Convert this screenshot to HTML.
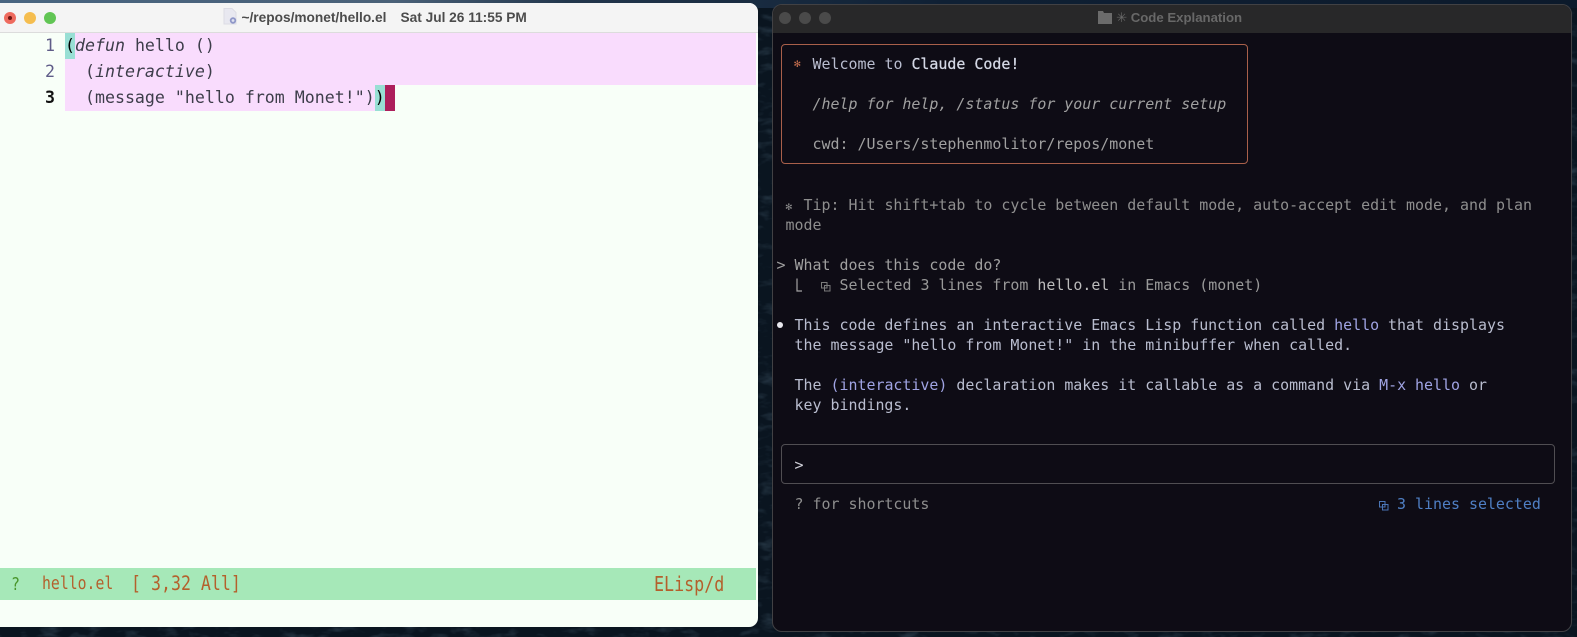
<!DOCTYPE html>
<html><head><meta charset="utf-8"><style>
html,body{margin:0;padding:0}
body{width:1577px;height:637px;overflow:hidden;position:relative;background:#0a1520}
div{position:absolute;white-space:pre}
.t{font:14.94px/20px "DejaVu Sans Mono","Liberation Mono",monospace;color:#b9bdcf;filter:blur(.3px)}
.e{font:16.6px/26px "DejaVu Sans Mono","Liberation Mono",monospace;color:#3d3d4a;filter:blur(.3px)}
.m{font:15.5px/20px "DejaVu Sans Mono","Liberation Mono",monospace;color:#b4602c;top:574px;transform:scaleY(1.2);filter:blur(.25px)}
.g{color:#8e8e8e}.h{color:#a0a0a0}.c{color:#a0a4e4}
.b{color:#d5d9e6;-webkit-text-stroke:.25px #d5d9e6}
i{font-style:italic}
</style></head><body>
<svg style="position:absolute;left:0;top:0" width="1577" height="637">
<defs><filter id="n"><feTurbulence type="fractalNoise" baseFrequency=".05 .12" numOctaves="3" seed="4"/><feColorMatrix values="0 0 0 0 .2 0 0 0 0 .34 0 0 0 0 .46 1.6 0 0 0 -.8"/></filter>
<linearGradient id="s" x1="0" x2="1" y1="0" y2="0"><stop offset="0" stop-color="#486480"/><stop offset=".25" stop-color="#4a6178"/><stop offset=".36" stop-color="#22364c"/><stop offset=".6" stop-color="#0f2034"/><stop offset="1" stop-color="#0c1a2b"/></linearGradient></defs>
<rect width="1577" height="637" filter="url(#n)" opacity=".35"/>
<rect width="1577" height="8" fill="url(#s)"/>
</svg>
<!-- Emacs window -->
<div style="left:0;top:3px;width:758px;height:624px;background:#f8fff8;border-radius:0 9px 9px 0;overflow:hidden">
<div style="left:0;top:0;width:758px;height:29px;background:#f4f4f4;border-bottom:1px solid #dcdcdc"></div>
</div>
<div style="left:3.5px;top:11.5px;width:12px;height:12px;border-radius:50%;background:#ee6a5e"></div>
<div style="left:7.5px;top:15.5px;width:4px;height:4px;border-radius:50%;background:#6e1410"></div>
<div style="left:23.5px;top:11.5px;width:12px;height:12px;border-radius:50%;background:#f5bd4f"></div>
<div style="left:43.5px;top:11.5px;width:12px;height:12px;border-radius:50%;background:#61c554"></div>
<svg style="position:absolute;left:222px;top:8px" width="16" height="17" viewBox="0 0 16 17"><path d="M2 .5H10L14 4.5V16H2Z" fill="#e8e8f0" stroke="#dcdce4"/><circle cx="11" cy="12.5" r="3.2" fill="#8f97c8"/><circle cx="11" cy="12.5" r="1.4" fill="#dfe2f0"/></svg>
<div style="left:241.5px;top:9px;font:bold 13.7px/17px 'Liberation Sans',sans-serif;color:#4c4c4c;filter:blur(.25px)">~/repos/monet/hello.el</div>
<div style="left:400.5px;top:9px;font:bold 13.7px/17px 'Liberation Sans',sans-serif;color:#4c4c4c;filter:blur(.25px)">Sat Jul 26 11:55 PM</div>

<div style="left:65px;top:33px;width:691px;height:52px;background:#f9dcfd"></div>
<div style="left:65px;top:85px;width:310px;height:26px;background:#f9dcfd"></div>
<div style="left:65px;top:33px;width:10px;height:26px;background:#98dfd4"></div>
<div style="left:375px;top:85px;width:10px;height:26px;background:#98dfd4"></div>
<div style="left:385px;top:85px;width:10px;height:26px;background:#ad1f5c"></div>

<div class="e" style="left:45px;top:33px;color:#5f5c88">1</div>
<div class="e" style="left:45px;top:59px;color:#5f5c88">2</div>
<div class="e" style="left:45px;top:85px;color:#111;font-weight:bold">3</div>
<div class="e" style="left:65px;top:33px"><b style="color:#000;font-weight:normal">(</b><i>defun</i> hello ()</div>
<div class="e" style="left:65px;top:59px">  (<i>interactive</i>)</div>
<div class="e" style="left:65px;top:85px">  (message "hello from Monet!")<span style="color:#000">)</span></div>

<div style="left:0;top:568px;width:756px;height:32px;background:#a6e8b8"></div>
<div class="m" style="left:11px;color:#4a962c;font-size:15px">?</div>
<div class="m" style="left:42px;font-size:14.8px">hello.el</div>
<div class="m" style="left:131px;font-size:16.6px">[ 3,32 All]</div>
<div class="m" style="left:654px;font-size:16.7px">ELisp/d</div>

<!-- Terminal window -->
<div style="left:772px;top:4px;width:798px;height:626px;background:#0e0c15;border:1px solid #414144;border-radius:10px;overflow:hidden">
<div style="left:0;top:0;width:798px;height:28px;background:#282829"></div>
</div>
<div style="left:779px;top:12px;width:12px;height:12px;border-radius:50%;background:#4a4a4a"></div>
<div style="left:799px;top:12px;width:12px;height:12px;border-radius:50%;background:#4a4a4a"></div>
<div style="left:819px;top:12px;width:12px;height:12px;border-radius:50%;background:#4a4a4a"></div>
<svg style="position:absolute;left:1098px;top:11px" width="14" height="13"><path d="M0 0H5L6 2H14V13H0Z" fill="#6b6b6b"/></svg>
<div style="left:1116px;top:9px;font:bold 13.2px/17px 'Liberation Sans','DejaVu Sans',sans-serif;color:#686868;filter:blur(.25px)">✳ Code Explanation</div>

<div style="left:781px;top:44px;width:465px;height:118px;border:1px solid #a9604a;border-radius:4px"></div>
<div class="t" style="left:794px;top:54px;color:#c9704f;font-size:11px">✻</div>
<div class="t" style="left:812.5px;top:54px">Welcome to <span class="b">Claude Code!</span></div>
<div class="t h" style="left:812.5px;top:94px"><i>/help for help, /status for your current setup</i></div>
<div class="t h" style="left:812.5px;top:134px">cwd: /Users/stephenmolitor/repos/monet</div>

<div class="t g" style="left:785.5px;top:195px"><span style="font-size:11px">✻</span></div>
<div class="t g" style="left:803.5px;top:195px">Tip: Hit shift+tab to cycle between default mode, auto-accept edit mode, and plan</div>
<div class="t g" style="left:785.5px;top:215px">mode</div>

<div class="t h" style="left:776.5px;top:255px">&gt;</div>
<div class="t h" style="left:794.5px;top:255px">What does this code do?</div>
<svg style="position:absolute;left:795px;top:278px" width="8" height="14"><path d="M2 .5V13H7" fill="none" stroke="#a3a3a3" stroke-width="1.2"/></svg>
<svg style="position:absolute;left:821px;top:282px" width="10" height="10"><path d="M.5.5H6V6H.5ZM3.5 3.5H9V9H3.5Z" fill="none" stroke="#7a7a7a"/></svg>
<div class="t" style="left:839.5px;top:275px;color:#999">Selected 3 lines from <span style="color:#bcbcbc">hello.el</span> in Emacs (monet)</div>

<div style="left:777px;top:322px;width:6px;height:6px;border-radius:50%;background:#e8e8ee"></div>
<div class="t" style="left:794.5px;top:315px">This code defines an interactive Emacs Lisp function called <span class="c">hello</span> that displays</div>
<div class="t" style="left:794.5px;top:335px">the message "hello from Monet!" in the minibuffer when called.</div>
<div class="t" style="left:794.5px;top:375px">The <span class="c">(interactive)</span> declaration makes it callable as a command via <span class="c">M-x hello</span> or</div>
<div class="t" style="left:794.5px;top:395px">key bindings.</div>

<div style="left:781px;top:444px;width:772px;height:38px;border:1px solid #504e52;border-radius:4px"></div>
<div class="t" style="left:794.5px;top:455px;color:#d0d0d8">&gt;</div>
<div class="t g" style="left:794.5px;top:494px">? for shortcuts</div>
<svg style="position:absolute;left:1379px;top:501px" width="10" height="10"><path d="M.5.5H6V6H.5ZM3.5 3.5H9V9H3.5Z" fill="none" stroke="#4a75b5"/></svg>
<div class="t" style="left:1397px;top:494px;color:#4f7fc4">3 lines selected</div>
</body></html>
